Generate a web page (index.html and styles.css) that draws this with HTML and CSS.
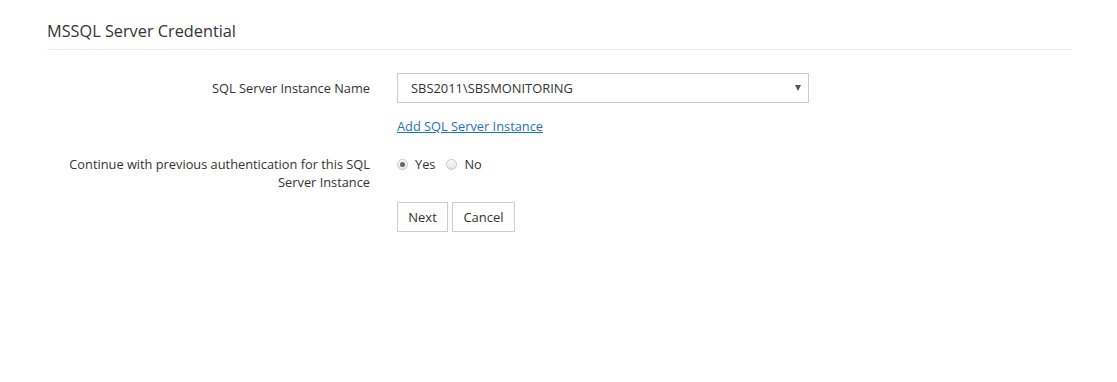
FILE: index.html
```html
<!DOCTYPE html>
<html>
<head>
<meta charset="utf-8">
<link rel="stylesheet" href="styles.css">
</head>
<body>
<div class="page">
  <h2 class="title">MSSQL Server Credential</h2>
  <div class="form">
    <div class="label label-mid">SQL Server Instance Name</div>
    <div class="control">
      <div class="select">
        <span>SBS2011\SBSMONITORING</span>
        <span class="arrow"></span>
      </div>
    </div>
    <div></div>
    <div class="control"><a class="link" href="#">Add SQL Server Instance</a></div>
    <div class="label">Continue with previous authentication for this SQL Server Instance</div>
    <div class="control radios">
      <label class="radio"><span class="dot checked"></span>Yes</label>
      <label class="radio"><span class="dot"></span>No</label>
    </div>
    <div></div>
    <div class="control buttons">
      <button class="btn">Next</button>
      <button class="btn">Cancel</button>
    </div>
  </div>
</div>
</body>
</html>
```

FILE: styles.css
```css
* { box-sizing: border-box; }
html, body { margin: 0; background: #fff; }
body {
  font-family: "Open Sans", "Liberation Sans", sans-serif;
  color: #333;
  font-size: 12.8px;
}
.page {
  padding: 0 45px 0 47px;
  width: 1117px;
}
.title {
  margin: 0;
  padding-top: 20px;
  height: 50px;
  font-size: 16.3px;
  font-weight: 400;
  line-height: 22px;
  color: #333;
  border-bottom: 1px solid #eaeaea;
}
.form {
  display: grid;
  grid-template-columns: 323px 412px;
  column-gap: 27px;
  padding-top: 23px;
}
.label {
  text-align: right;
  line-height: 18px;
  padding-left: 8px;
  color: #333;
}
.label-mid {
  display: flex;
  align-items: center;
  justify-content: flex-end;
  height: 30px;
}
.select {
  height: 30px;
  border: 1px solid #ccc;
  display: flex;
  align-items: center;
  justify-content: space-between;
  padding: 0 7px 0 13px;
  color: #333;
  font-size: 12.9px;
}
.arrow {
  width: 0; height: 0;
  border-left: 3px solid transparent;
  border-right: 3px solid transparent;
  border-top: 6px solid #555;
}
.link {
  display: block;
  margin-top: 14px;
  margin-bottom: 20px;
  color: #1a73c4;
  text-decoration: underline;
  line-height: 18px;
}
.radios {
  display: flex;
  align-items: flex-start;
  line-height: 18px;
  gap: 11px;
}
.radio {
  display: flex;
  align-items: center;
  height: 18px;
  color: #333;
}
.dot {
  width: 11px; height: 11px;
  border-radius: 50%;
  border: 1px solid #c8c8c8;
  background: linear-gradient(#fafafa, #e6e6e6);
  margin-right: 7px;
  position: relative;
}
.dot.checked::after {
  content: "";
  position: absolute;
  left: 2px; top: 2px;
  width: 5px; height: 5px;
  border-radius: 50%;
  background: #666;
}
.buttons {
  display: flex;
  gap: 4px;
  margin-top: 11px;
}
.btn {
  height: 30px;
  padding: 0 10px;
  background: #fff;
  border: 1px solid #ccc;
  font-family: "Open Sans", "Liberation Sans", sans-serif;
  font-size: 13px;
  color: #333;
}
.btn:first-child { width: 51px; }
.btn:last-child { width: 63px; }
```
